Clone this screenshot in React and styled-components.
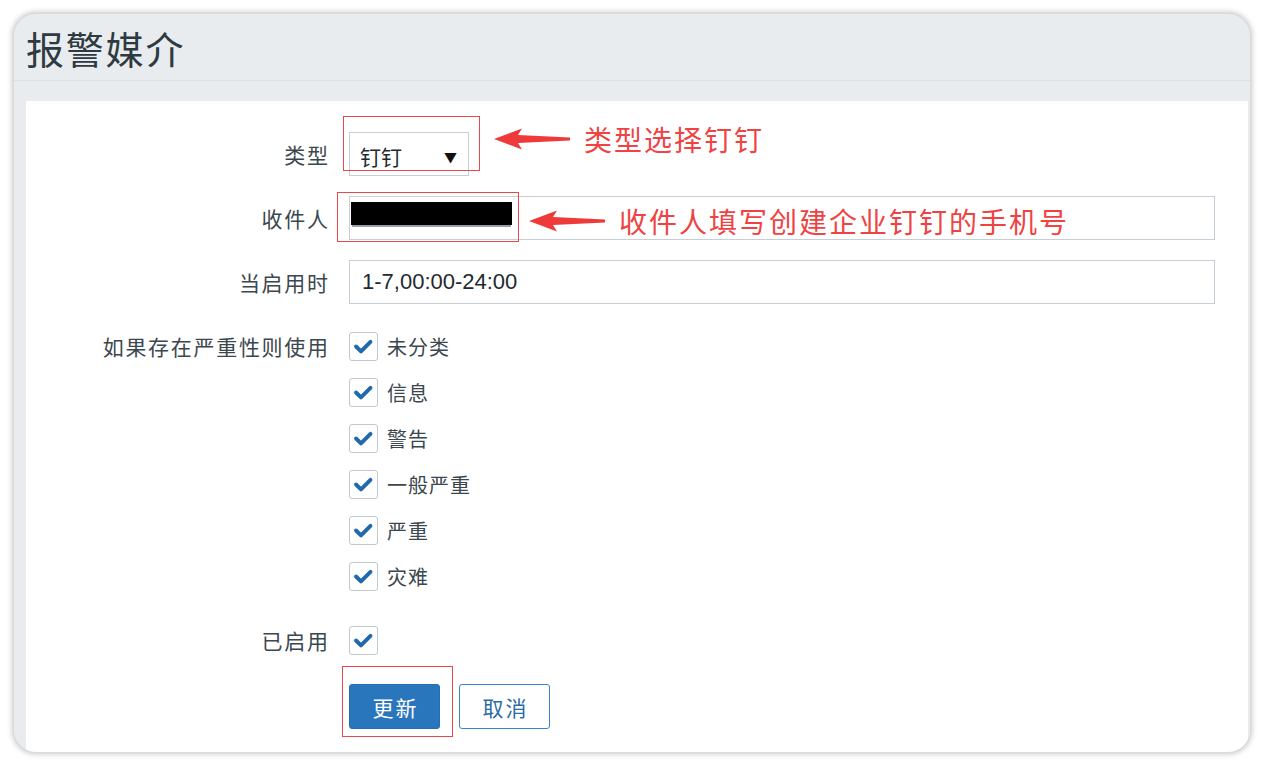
import React from 'react'
import styled, { createGlobalStyle } from 'styled-components'

const GlobalStyle = createGlobalStyle`
  html, body {
    margin: 0;
    padding: 0;
    background: #fff;
  }
  body {
    font-family: "Noto Sans CJK SC", "Noto Sans", sans-serif;
    color: #3a464d;
  }
`

const Page = styled.div`
  padding: 12px;
  width: 1263px;
  height: 765px;
  box-sizing: border-box;
`
const Frame = styled.div`
  width: 1240px;
  height: 742px;
  box-sizing: border-box;
  border: 2px solid #dcdcdc;
  border-radius: 24px;
  box-shadow: 0 0 0 2px #ececec, 0 0 4px 3px #f1f1f1;
  background: #e9ecee;
  overflow: hidden;
  display: flex;
  flex-direction: column;
`
const Header = styled.div`
  height: 66px;
  padding-left: 12px;
  display: flex;
  align-items: center;
  border-bottom: 1px solid #dde1e3;
`
const Title = styled.h1`
  margin: 0;
  font-size: 38px;
  font-weight: 400;
  letter-spacing: 1.8px;
  color: #2e3a41;
`
const Band = styled.div`
  height: 20px;
`
const Panel = styled.div`
  flex: 1;
  margin: 0 2px 0 12px;
  background: #fff;
  position: relative;
  padding: 31px 33px 0 0;
`
const Row = styled.div`
  display: grid;
  grid-template-columns: 302px 1fr;
  column-gap: 21px;
  align-items: ${p => (p.top ? 'start' : 'center')};
  margin-top: ${p => p.gap || 0}px;
`
const Label = styled.div`
  text-align: right;
  font-size: 21px;
  line-height: 29px;
  letter-spacing: 1.7px;
  margin-right: -1.7px;
  color: #3b474e;
`
const Select = styled.div`
  width: 120px;
  height: 44px;
  box-sizing: border-box;
  border: 1px solid #c6cfd5;
  display: flex;
  align-items: center;
  justify-content: space-between;
  padding: 4px 11px 0 10px;
  font-size: 21px;
  color: #1f2a30;
`
const Caret = styled.span`
  font-size: 13px;
  color: #111;
`
const Field = styled.div`
  height: 44px;
  box-sizing: border-box;
  border: 1px solid #c6cfd5;
  display: flex;
  align-items: center;
  padding-left: 12px;
  font-family: "Liberation Sans", "Noto Sans CJK SC", sans-serif;
  font-size: 22px;
  color: #1f2a30;
  position: relative;
`
const Redacted = styled.span`
  position: absolute;
  left: 1px;
  top: 5px;
  width: 161px;
  height: 23px;
  background: #000;
  box-shadow: 0 3px 0 -1px #9a9fa3;
`
const CheckList = styled.div`
  display: flex;
  flex-direction: column;
  gap: 17px;
`
const CheckItem = styled.label`
  display: flex;
  align-items: center;
  gap: 9px;
  height: 29px;
  line-height: 29px;
  font-size: 20px;
  letter-spacing: 1px;
  color: #3b474e;
`
const Box = styled.span`
  width: 29px;
  height: 29px;
  box-sizing: border-box;
  border: 1px solid #bfc8ce;
  border-radius: 3px;
  display: flex;
  align-items: center;
  justify-content: center;
  background: #fff;
`
const Buttons = styled.div`
  display: flex;
  gap: 19px;
`
const Button = styled.button`
  width: 91px;
  height: 45px;
  box-sizing: border-box;
  border-radius: 3px;
  font-family: "Noto Sans CJK SC", sans-serif;
  font-size: 21px;
  letter-spacing: 2px;
  padding: 0 0 0 2px;
  border: 1px solid ${p => (p.primary ? '#2570b5' : '#3a85c8')};
  background: ${p => (p.primary ? '#2a76bd' : '#fff')};
  color: ${p => (p.primary ? '#fff' : '#2b6ca6')};
`
const Mark = styled.div`
  position: absolute;
  left: ${p => p.x}px;
  top: ${p => p.y}px;
  width: ${p => p.w}px;
  height: ${p => p.h}px;
  border: 1px solid #e8474b;
  box-sizing: border-box;
  pointer-events: none;
`
const Note = styled.div`
  position: absolute;
  left: ${p => p.x}px;
  top: ${p => p.y}px;
  display: flex;
  align-items: center;
  gap: 14px;
  color: #ef4343;
  font-size: 28px;
  letter-spacing: 2px;
  white-space: nowrap;
`

const Arrow = () => (
  <svg width="76" height="24" viewBox="0 0 76 24">
    <path d="M0 12 L28 1.5 L24 8 L76 10.6 L76 13.4 L24 16 L28 22.5 Z" fill="#ee3a3a" />
  </svg>
)

const Check = () => (
  <svg width="29" height="29" viewBox="0 0 29 29">
    <path d="M6.5 14.5 L11.8 19.8 L22 9.5" fill="none" stroke="#2268ad" strokeWidth="4.2" strokeLinecap="round" strokeLinejoin="round" />
  </svg>
)

const severities = ['未分类', '信息', '警告', '一般严重', '严重', '灾难']

export default function App() {
  return (
    <Page>
      <GlobalStyle />
      <Frame>
        <Header>
          <Title>报警媒介</Title>
        </Header>
        <Band />
        <Panel>
          <Row>
            <Label>类型</Label>
            <Select>
              <span>钉钉</span>
              <Caret>▼</Caret>
            </Select>
          </Row>
          <Row gap={20}>
            <Label>收件人</Label>
            <Field>
              <Redacted />
            </Field>
          </Row>
          <Row gap={20}>
            <Label>当启用时</Label>
            <Field>1-7,00:00-24:00</Field>
          </Row>
          <Row gap={28} top>
            <Label>如果存在严重性则使用</Label>
            <CheckList>
              {severities.map(s => (
                <CheckItem key={s}>
                  <Box><Check /></Box>
                  {s}
                </CheckItem>
              ))}
            </CheckList>
          </Row>
          <Row gap={35}>
            <Label>已启用</Label>
            <CheckItem>
              <Box><Check /></Box>
            </CheckItem>
          </Row>
          <Row gap={29}>
            <span />
            <Buttons>
              <Button primary>更新</Button>
              <Button>取消</Button>
            </Buttons>
          </Row>

          <Mark x={317} y={15} w={137} h={55} />
          <Note x={468} y={18}>
            <Arrow />
            类型选择钉钉
          </Note>
          <Mark x={311} y={91} w={182} h={50} />
          <Note x={503} y={100}>
            <Arrow />
            收件人填写创建企业钉钉的手机号
          </Note>
          <Mark x={316} y={565} w={111} h={71} />
        </Panel>
      </Frame>
    </Page>
  )
}
